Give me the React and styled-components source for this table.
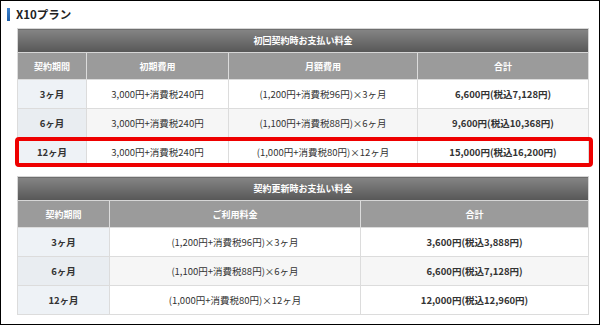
import React from "react";
import styled, { createGlobalStyle } from "styled-components";

const Global = createGlobalStyle`
  html, body { margin: 0; padding: 0; background: #fff; }
  body { font-family: "Noto Sans CJK JP", "Noto Sans", sans-serif; }
`;

const Frame = styled.div`
  box-sizing: border-box;
  width: 600px;
  height: 325px;
  border: 1px solid #000;
  padding: 6px 0 0 6px;
  background: #fff;
`;

const Title = styled.h2`
  margin: 0 0 6px 0;
  display: flex;
  align-items: center;
  gap: 6px;
  font-size: 11.5px;
  font-weight: 700;
  color: #222;
  line-height: 15px;
  height: 15px;
  &::before {
    content: "";
    display: block;
    width: 3px;
    height: 13px;
    background: linear-gradient(#3d83d0, #1d5ea8);
  }
`;

const Block = styled.div`
  position: relative;
  margin-left: 10px;
  width: 572px;
  margin-bottom: ${(p) => p.$gap || 0}px;
`;

const Table = styled.table`
  width: 100%;
  border-collapse: collapse;
  table-layout: fixed;
  border: 1px solid #d6d6d6;
  font-size: 9.5px;
  color: #333;
`;

const TopHead = styled.th`
  height: 23px;
  padding: 0;
  background: linear-gradient(#858585, #575757);
  color: #fff;
  font-weight: 700;
  font-size: 9px;
  text-align: center;
  border: 1px solid #d6d6d6;
`;

const SubHead = styled.th`
  height: 26px;
  padding: 0;
  background: #9b9b9b;
  color: #fff;
  font-weight: 700;
  font-size: 9px;
  text-align: center;
  border: 1px solid #dcdcdc;
`;

const Cell = styled.td`
  height: 28px;
  padding: 0;
  text-align: center;
  border: 1px solid #dcdcdc;
  background: ${(p) => (p.$alt ? "#f6f6f6" : "#fff")};
  font-weight: ${(p) => (p.$bold ? 700 : 400)};
  white-space: nowrap;
`;

const KeyCell = styled(Cell)`
  background: ${(p) => (p.$alt ? "#e9edf1" : "#eef2f6")};
  font-weight: 700;
`;

const Highlight = styled.div`
  position: absolute;
  left: -2px;
  right: -4px;
  top: 109px;
  height: 30px;
  box-sizing: border-box;
  border: 4px solid #ee0000;
  border-radius: 4px;
  pointer-events: none;
`;

const initial = [
  ["3ヶ月", "3,000円+消費税240円", "(1,200円+消費税96円)×3ヶ月", "6,600円(税込7,128円)"],
  ["6ヶ月", "3,000円+消費税240円", "(1,100円+消費税88円)×6ヶ月", "9,600円(税込10,368円)"],
  ["12ヶ月", "3,000円+消費税240円", "(1,000円+消費税80円)×12ヶ月", "15,000円(税込16,200円)"],
];

const renewal = [
  ["3ヶ月", "(1,200円+消費税96円)×3ヶ月", "3,600円(税込3,888円)"],
  ["6ヶ月", "(1,100円+消費税88円)×6ヶ月", "6,600円(税込7,128円)"],
  ["12ヶ月", "(1,000円+消費税80円)×12ヶ月", "12,000円(税込12,960円)"],
];

export default function App() {
  return (
    <>
      <Global />
      <Frame>
        <Title>X10プラン</Title>
        <Block $gap={9}>
          <Table>
            <colgroup>
              <col style={{ width: 69 }} />
              <col style={{ width: 142 }} />
              <col style={{ width: 189 }} />
              <col />
            </colgroup>
            <thead>
              <tr>
                <TopHead colSpan={4}>初回契約時お支払い料金</TopHead>
              </tr>
              <tr>
                <SubHead>契約期間</SubHead>
                <SubHead>初期費用</SubHead>
                <SubHead>月額費用</SubHead>
                <SubHead>合計</SubHead>
              </tr>
            </thead>
            <tbody>
              {initial.map((r, i) => (
                <tr key={r[0]}>
                  <KeyCell $alt={i === 1}>{r[0]}</KeyCell>
                  <Cell $alt={i === 1}>{r[1]}</Cell>
                  <Cell $alt={i === 1}>{r[2]}</Cell>
                  <Cell $alt={i === 1} $bold>{r[3]}</Cell>
                </tr>
              ))}
            </tbody>
          </Table>
          <Highlight />
        </Block>
        <Block>
          <Table>
            <colgroup>
              <col style={{ width: 92 }} />
              <col style={{ width: 251 }} />
              <col />
            </colgroup>
            <thead>
              <tr>
                <TopHead colSpan={3}>契約更新時お支払い料金</TopHead>
              </tr>
              <tr>
                <SubHead>契約期間</SubHead>
                <SubHead>ご利用料金</SubHead>
                <SubHead>合計</SubHead>
              </tr>
            </thead>
            <tbody>
              {renewal.map((r, i) => (
                <tr key={r[0]}>
                  <KeyCell $alt={i === 1}>{r[0]}</KeyCell>
                  <Cell $alt={i === 1}>{r[1]}</Cell>
                  <Cell $alt={i === 1} $bold>{r[2]}</Cell>
                </tr>
              ))}
            </tbody>
          </Table>
        </Block>
      </Frame>
    </>
  );
}
